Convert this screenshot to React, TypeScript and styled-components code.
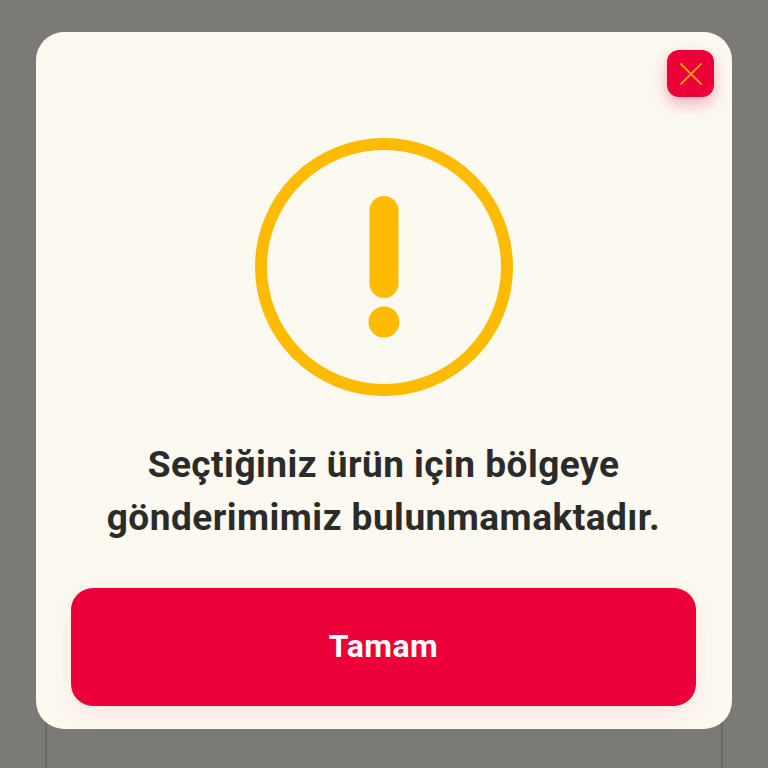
import React from 'react';
import styled, { createGlobalStyle } from 'styled-components';

const GlobalStyle = createGlobalStyle`
  html, body {
    margin: 0;
    padding: 0;
    height: 100%;
    background: #7b7a76;
    font-family: Roboto, "Liberation Sans", sans-serif;
  }
`;

const Backdrop = styled.div`
  position: relative;
  width: 768px;
  height: 768px;
  overflow: hidden;
  box-sizing: border-box;
  padding: 32px 36px 0;
  background: #7b7a76;
`;

// the page card peeking out from under the dialog
const PageCard = styled.div`
  position: absolute;
  left: 45px;
  right: 45px;
  top: 40px;
  height: 800px;
  border: 2px solid #6c6b67;
  border-radius: 20px;
  box-sizing: border-box;
`;

const Dialog = styled.div`
  position: relative;
  box-sizing: border-box;
  width: 696px;
  height: 697px;
  padding: 106px 36px 23px 35px;
  display: flex;
  flex-direction: column;
  align-items: center;
  background: #fcf9f1;
  border-radius: 28px;
`;

const CloseButton = styled.button`
  position: absolute;
  top: 18px;
  right: 18px;
  width: 47px;
  height: 47px;
  padding: 0;
  border: 0;
  border-radius: 12px;
  background: #ec0039;
  box-shadow: 0 7px 16px rgba(238, 0, 58, 0.3);
  display: flex;
  align-items: center;
  justify-content: center;
`;

const WarningIcon = styled.svg`
  width: 258px;
  height: 258px;
  flex: none;
`;

const Message = styled.p`
  margin: 42px 0 0;
  color: #2b2b29;
  font-size: 37px;
  font-weight: 700;
  letter-spacing: 0.48px;
  line-height: 53px;
  text-align: center;
  white-space: nowrap;
`;

const ConfirmButton = styled.button`
  margin-top: auto;
  width: 625px;
  height: 118px;
  flex: none;
  border: 0;
  border-radius: 22px;
  background: #ec0039;
  color: #fff;
  font-family: inherit;
  font-size: 32px;
  font-weight: 700;
  letter-spacing: 0.5px;
  padding-bottom: 3px;
  box-shadow: 0 8px 22px rgba(238, 0, 58, 0.08);
`;

export default function App() {
  return (
    <>
      <GlobalStyle />
      <Backdrop>
        <PageCard />
        <Dialog>
          <CloseButton aria-label="Kapat">
            <svg width="24" height="24" viewBox="0 0 24 24" fill="none">
              <path d="M1.5 1.5 L22.5 22.5 M22.5 1.5 L1.5 22.5" stroke="#ff9a1f" strokeWidth="1.8" />
            </svg>
          </CloseButton>
          <WarningIcon viewBox="0 0 258 258" fill="none">
            <circle cx="129" cy="129" r="123" stroke="#ffbb00" strokeWidth="12" />
            <rect x="114.5" y="58" width="29" height="102" rx="14.5" fill="#ffbb00" />
            <circle cx="129" cy="184" r="15.5" fill="#ffbb00" />
          </WarningIcon>
          <Message>
            Seçtiğiniz ürün için bölgeye
            <br />
            gönderimimiz bulunmamaktadır.
          </Message>
          <ConfirmButton>Tamam</ConfirmButton>
        </Dialog>
      </Backdrop>
    </>
  );
}
